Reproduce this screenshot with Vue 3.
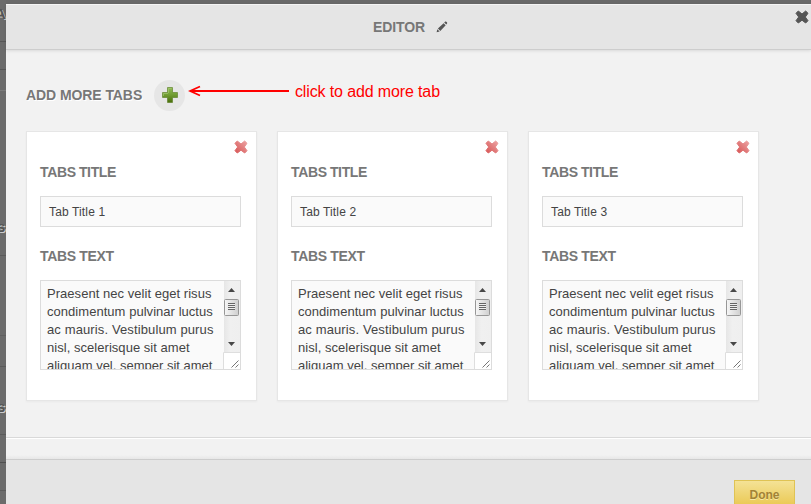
<script setup>
import { ref } from 'vue'

const text = ['Praesent nec velit eget risus', 'condimentum pulvinar luctus', 'ac mauris. Vestibulum purus', 'nisl, scelerisque sit amet', 'aliquam vel, semper sit amet']
const tabs = ref([1, 2, 3].map((n) => ({ id: n, title: `Tab Title ${n}`, lines: text })))
</script>

<template>
  <div class="page">
    <div class="backdrop">
      <span class="ghost first">A</span>
      <span class="ghost second">s</span>
      <span class="ghost third">s</span>
    </div>
    <section class="modal">
      <header class="head">
        <h1 class="label editor">EDITOR</h1>
        <svg class="pencil" width="12" height="12" viewBox="0 0 12 12">
          <path d="M.6 11.2 1.3 8.2 3.7 10.5ZM1.9 7.5 7.6 2.2 9.7 4.3 4.3 9.9ZM8.2 1.6 9.3.6Q10 .2 10.7.9 11.5 1.7 11.1 2.5L10.3 3.6Z" fill="#555" />
        </svg>
        <svg class="close" width="14" height="14" viewBox="0 0 14 14">
          <path d="M3.3 1 7 4 10.7 1 13 3.3 10.3 7 13 10.7 10.7 13 7 10.2 3.3 13 1 10.7 3.7 7 1 3.3Z" fill="#555" stroke="#555" stroke-width="1" stroke-linejoin="round" />
        </svg>
      </header>
      <main class="body">
        <div class="add-row">
          <h2 class="label add-label">ADD MORE TABS</h2>
          <button class="add">
            <svg width="16" height="16" viewBox="0 0 16 16">
              <defs>
                <linearGradient id="green" x1="0" y1="0" x2="0" y2="1">
                  <stop offset="0" stop-color="#8fba54" />
                  <stop offset=".5" stop-color="#709c32" />
                  <stop offset="1" stop-color="#496e0b" />
                </linearGradient>
              </defs>
              <path d="M5.5.5h5v5h5v5h-5v5h-5v-5h-5v-5h5Z" fill="url(#green)" stroke="#567b20" stroke-opacity=".6" />
              <path d="M6.5 6V1.5h3M1.5 9V6.5H6" fill="none" stroke="#a9cd78" stroke-opacity=".6" />
            </svg>
          </button>
          <svg class="arrow" width="102" height="14" viewBox="0 0 102 14">
            <path d="M2 7H101" stroke="#f00" stroke-width="2" fill="none" />
            <path d="M12 2.5 2 7 12 11.5" stroke="#f00" stroke-width="1.8" fill="none" />
          </svg>
          <span class="hint">click to add more tab</span>
        </div>
        <div class="cards">
          <article v-for="tab in tabs" :key="tab.id" class="card">
            <svg class="remove" width="14" height="14" viewBox="0 0 14 14">
              <defs>
                <linearGradient :id="`red${tab.id}`" x1="1" y1="0" x2="0" y2="1">
                  <stop offset="0" stop-color="#eca5a5" />
                  <stop offset="1" stop-color="#d75353" />
                </linearGradient>
              </defs>
              <path d="M3.3 1 7 4 10.7 1 13 3.3 10.3 7 13 10.7 10.7 13 7 10.2 3.3 13 1 10.7 3.7 7 1 3.3Z" :fill="`url(#red${tab.id})`" :stroke="`url(#red${tab.id})`" stroke-linejoin="round" />
            </svg>
            <h3 class="label field-label">TABS TITLE</h3>
            <div class="input">{{ tab.title }}</div>
            <h3 class="label field-label text-label">TABS TEXT</h3>
            <div class="area">
              <div class="copy"><div v-for="line in tab.lines" :key="line">{{ line }}</div></div>
              <div class="side">
                <svg class="scroll" width="17" height="71" viewBox="0 0 17 71">
                  <defs>
                    <linearGradient id="thumb"><stop offset="0" stop-color="#f6f6f6" /><stop offset="1" stop-color="#cfcfcf" /></linearGradient>
                    <linearGradient id="track"><stop offset="0" stop-color="#e6e6e6" /><stop offset=".4" stop-color="#f0f0f0" /><stop offset="1" stop-color="#efefef" /></linearGradient>
                  </defs>
                  <path d="M1 0h16v71H1Z" fill="url(#track)" />
                  <path d="M5 11 8.5 7 12 11ZM5 61 8.5 65 12 61Z" fill="#484848" />
                  <rect x="1.5" y="18.5" width="14" height="16" rx="1" fill="url(#thumb)" stroke="#979797" />
                  <path d="M5 22.5h7M5 24.5h7M5 26.5h7M5 28.5h7" stroke="#666" />
                  <path d="M5 23.5h7M5 25.5h7M5 27.5h7" stroke="#eee" />
                </svg>
                <svg class="grip" width="17" height="17" viewBox="0 0 17 17">
                  <path d="M0 0h17v17H0Z" fill="#fff" />
                  <path d="M.5 17V.5H17" fill="none" stroke="#dedede" />
                  <path d="m8.5 15.5 7-7M12.5 15.5l3-3" stroke="#666" stroke-width=".9" />
                </svg>
              </div>
            </div>
          </article>
        </div>
      </main>
      <div class="strip"></div>
      <footer class="foot"><button class="done">Done</button></footer>
    </section>
  </div>
</template>

<style>
body { margin: 0; overflow: hidden; }
</style>

<style scoped>
* { box-sizing: border-box; }
.page { width: 811px; height: 504px; padding: 4px 0 0 6px; position: relative; overflow: hidden; background: #696969; font-family: "Liberation Sans", Arial, sans-serif; }
.backdrop { position: absolute; left: 0; top: 0; width: 6px; height: 504px; overflow: hidden; background: linear-gradient(#575757, #575757) 0 41px / 6px 1px no-repeat, linear-gradient(#575757, #575757) 0 69px / 6px 1px no-repeat, linear-gradient(#7b7b7b, #7b7b7b) 0 90px / 6px 1px no-repeat, linear-gradient(#5b5b5b, #5b5b5b) 0 255px / 6px 1px no-repeat, linear-gradient(#606060, #606060) 0 335px / 6px 1px no-repeat, linear-gradient(#5b5b5b, #5b5b5b) 0 366px / 6px 1px no-repeat, linear-gradient(#5b5b5b, #5b5b5b) 0 434px / 6px 1px no-repeat, linear-gradient(#505050, #505050) 0 462px / 6px 1px no-repeat, linear-gradient(#5b5b5b, #5b5b5b) 0 490px / 6px 1px no-repeat, #6b6b6b; }
.ghost { position: absolute; left: -3px; font-size: 15px; line-height: 14px; font-weight: bold; color: #555; text-shadow: 1px 1px 0 #ccc; }
.first { top: 7px; left: -5px; }
.second { top: 220px; }
.third { top: 400px; }
.modal { height: 500px; display: flex; flex-direction: column; background: #f2f2f2; position: relative; }
.label { margin: 0; font-size: 14px; line-height: 16px; font-weight: bold; color: #777; text-shadow: 1px 1px 0 #fff; white-space: nowrap; }
.head { height: 46px; flex: none; display: flex; align-items: center; padding-left: 367px; background: #e5e5e5; border-top: 1px solid #f4f4f4; border-bottom: 1px solid #cdcdcd; box-shadow: 0 1px 3px rgba(0, 0, 0, .1); }
.editor { width: 63px; text-shadow: none; letter-spacing: -.1px; }
.close { margin-left: auto; margin-right: 2px; margin-bottom: 20px; }
.body { height: 388px; flex: none; padding: 30px 20px 0; border-bottom: 1px solid #d9d9d9; }
.add-row { height: 31px; display: flex; align-items: center; }
.add-label { width: 128px; padding-bottom: 2px; letter-spacing: -.08px; }
.add { width: 31px; height: 31px; flex: none; display: flex; align-items: center; justify-content: center; border: 0; border-radius: 50%; padding: 0 0 1px; background: #e6e6e6; }
.arrow { margin-left: 3px; margin-bottom: 9px; flex: none; }
.hint { margin-left: 5px; margin-bottom: 8px; color: #f00; font-size: 16px; line-height: 18px; letter-spacing: -.13px; white-space: nowrap; }
.cards { display: flex; gap: 20px; margin-top: 20px; }
.card { width: 231px; height: 270px; padding: 32px 15px 0 13px; background: #fff; border: 1px solid #e6e6e6; box-shadow: 0 1px 2px rgba(0, 0, 0, .04); position: relative; }
.remove { position: absolute; right: 8px; top: 8px; }
.field-label { text-shadow: none; letter-spacing: -.35px; word-spacing: -.3px; }
.text-label { letter-spacing: -.3px; }
.input { width: 201px; height: 31px; margin-top: 16px; padding: 1px 0 0 8px; background: #fafafa; border: 1px solid #dcdcdc; font-size: 12px; line-height: 29px; letter-spacing: .14px; color: #444; }
.text-label { margin-top: 21px; }
.area { width: 201px; height: 90px; margin-top: 16px; display: flex; justify-content: space-between; border: 1px solid #dcdcdc; background: #fafafa; overflow: hidden; }
.copy { padding: 4px 0 0 6px; font-size: 13px; line-height: 18px; letter-spacing: .04px; color: #444; white-space: nowrap; }
.copy div:nth-child(3) { letter-spacing: .12px; }
.copy div:nth-child(5) { letter-spacing: 0; }
.side { width: 17px; flex: none; display: flex; flex-direction: column; }
.side svg { display: block; }
.strip { height: 21px; flex: none; border-top: 1px solid #fff; background: linear-gradient(#f2f2f2 16px, #e7e7e7); }
.foot { height: 45px; flex: none; display: flex; justify-content: flex-end; padding: 20px 16px 0 0; background: #e5e5e5; border-top: 1px solid #cdcdcd; }
.done { width: 61px; height: 30px; flex: none; border: 1px solid #dfc354; padding: 0; background: linear-gradient(#f4e296, #e9c54a); color: #a28235; font: bold 12px/28px "Liberation Sans", Arial, sans-serif; text-shadow: 0 1px 0 #f6e7a4; }
</style>
